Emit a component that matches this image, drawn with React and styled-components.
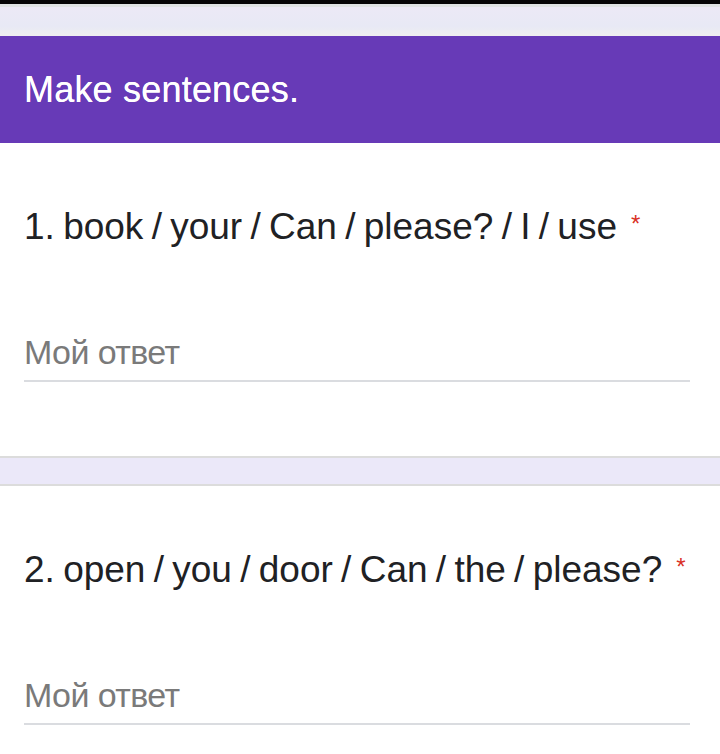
import styled, { createGlobalStyle } from "styled-components";

const GlobalStyle = createGlobalStyle`
  body {
    margin: 0;
    background: #ffffff;
    font-family: "Liberation Sans", Arial, sans-serif;
  }
`;

const Page = styled.div`
  width: 720px;
  display: flex;
  flex-direction: column;
`;

const TopBar = styled.div`
  height: 4px;
  background: #050505;
`;

const TopBand = styled.div`
  height: 32px;
  background: linear-gradient(#dfe3e3 0 3px, #ece9f6 3px, #e8e9f5 70%, #efeef0 100%);
`;

const Header = styled.div`
  height: 107px;
  background: #673ab7;
  display: flex;
  align-items: center;
  padding: 0 24px;
  box-sizing: border-box;
`;

const Title = styled.h1`
  margin: 0;
  color: #ffffff;
  font-size: 36px;
  font-weight: 400;
  letter-spacing: 0.2px;
  text-shadow: 0 0 0.6px #ffffff;
`;

const Card = styled.div`
  background: #ffffff;
  padding: 61px 30px 0 24px;
  height: ${(p) => p.$height}px;
  box-sizing: border-box;
  display: flex;
  flex-direction: column;
`;

const Question = styled.div`
  font-size: 37px;
  line-height: 40px;
  word-spacing: -2px;
  color: #202124;
  white-space: nowrap;
`;

const Star = styled.span`
  color: #d93025;
  font-size: 24px;
  vertical-align: 7px;
  margin-left: 14px;
`;

const Answer = styled.div`
  margin-top: 86px;
  font-size: 34px;
  line-height: 38px;
  letter-spacing: -0.6px;
  color: #7a7a7a;
  padding-bottom: 9px;
  border-bottom: 2px solid #dadce0;
`;

const Separator = styled.div`
  height: 30px;
  box-sizing: border-box;
  background: #ebe8f9;
  border-top: 2px solid #dcdcdc;
  border-bottom: 2px solid #dcdcdc;
`;

const questions = [
  "1. book / your / Can / please? / I / use",
  "2. open / you / door / Can / the / please?",
];

export default function App() {
  return (
    <Page>
      <GlobalStyle />
      <TopBar />
      <TopBand />
      <Header>
        <Title>Make sentences.</Title>
      </Header>
      {questions.map((q, i) => (
        <div key={q}>
          {i > 0 && <Separator />}
          <Card $height={313}>
            <Question>
              {q}
              <Star>*</Star>
            </Question>
            <Answer>Мой ответ</Answer>
          </Card>
        </div>
      ))}
    </Page>
  );
}
